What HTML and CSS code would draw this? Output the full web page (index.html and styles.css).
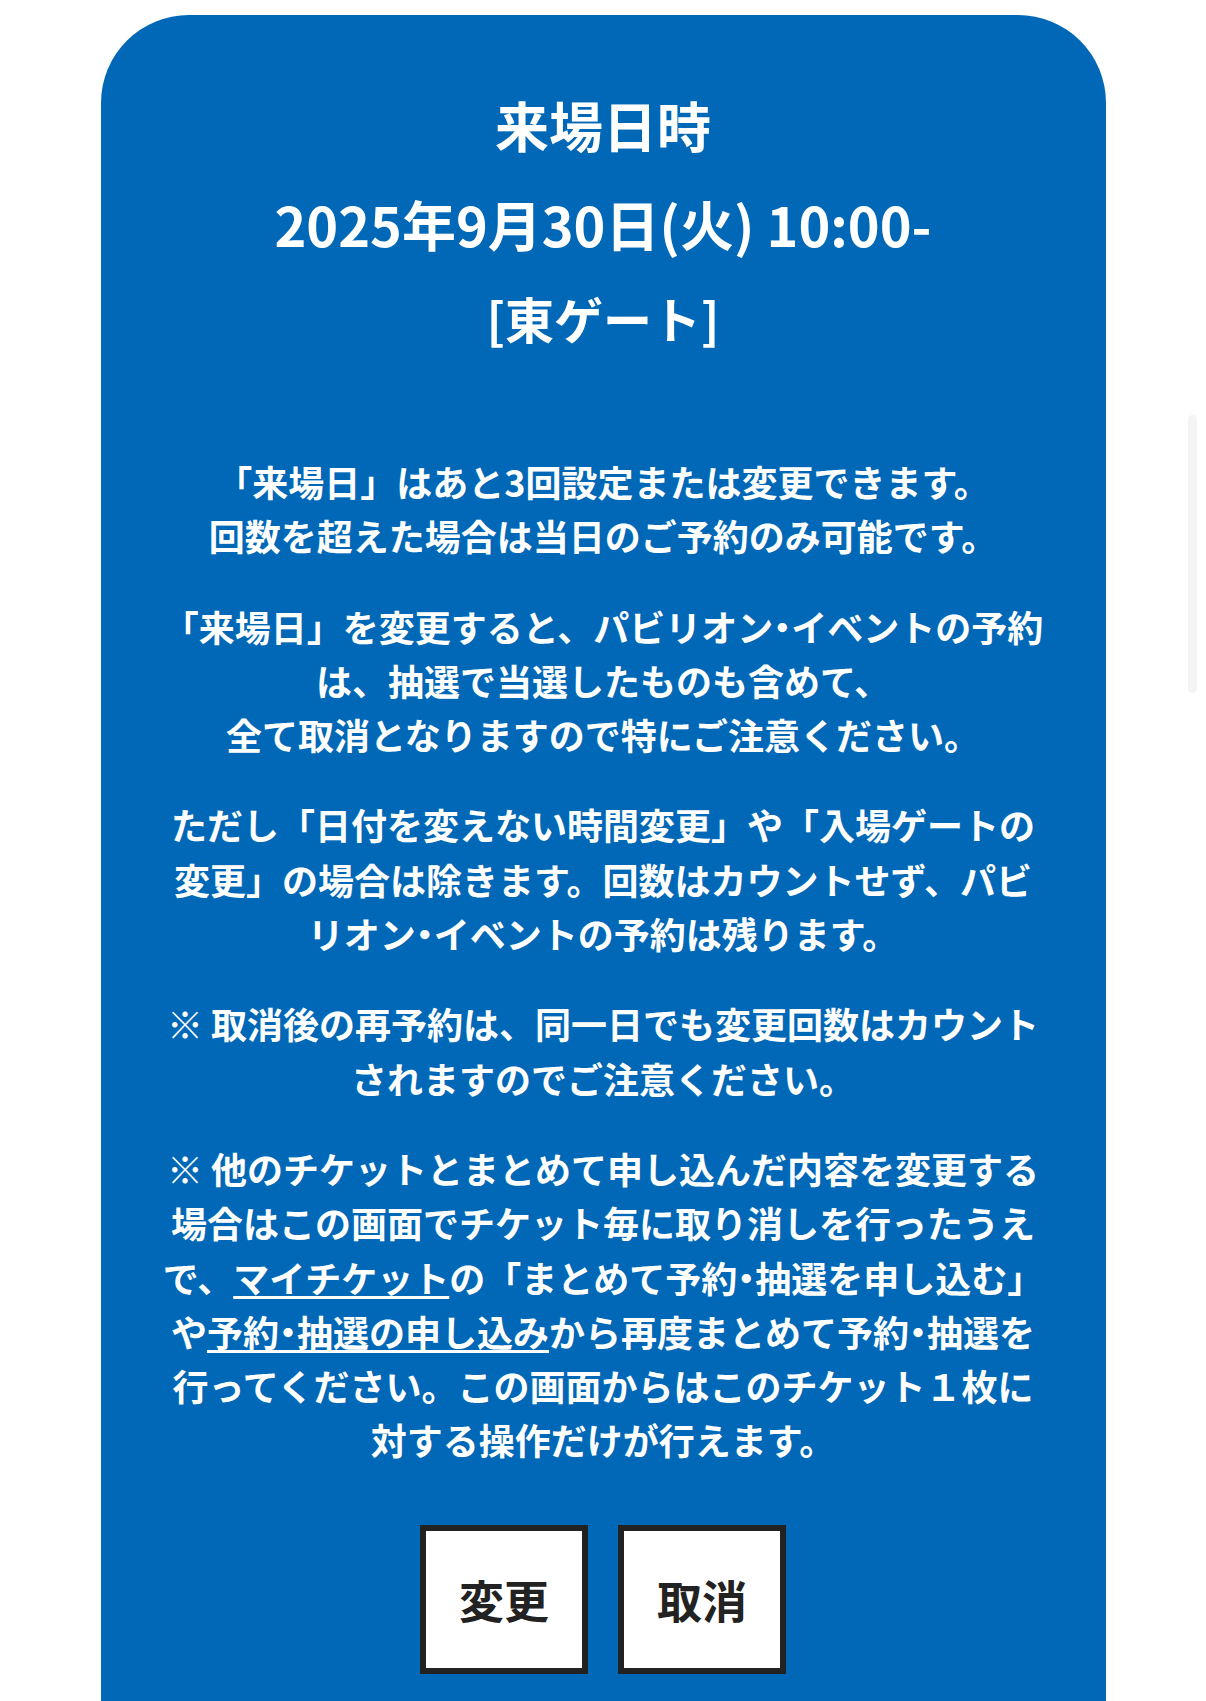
FILE: index.html
```html
<!DOCTYPE html>
<html lang="ja">
<head>
<meta charset="utf-8">
<title>来場日時</title>
<link rel="stylesheet" href="styles.css">
</head>
<body>
<main class="card">
  <div class="visit">
    <h2 class="visit-title">来場日時</h2>
    <p class="visit-date">2025年9月30日(火) 10:00-</p>
    <p class="visit-gate">[東ゲート]</p>
  </div>
  <div class="notes">
    <p>「来場日」はあと3回設定または変更できます。<br>回数を超えた場合は当日のご予約のみ可能です。</p>
    <p>「来場日」を変更すると、パビリオン<span class="dot">・</span>イベントの予約は、抽選で当選したものも含めて、<br>全て取消となりますので特にご注意ください。</p>
    <p>ただし「日付を変えない時間変更」や「入場ゲートの変更」の場合は除きます。回数はカウントせず、パビリオン<span class="dot">・</span>イベントの予約は残ります。</p>
    <p>※ 取消後の再予約は、同一日でも変更回数はカウントされますのでご注意ください。</p>
    <p>※ 他のチケットとまとめて申し込んだ内容を変更する場合はこの画面でチケット毎に取り消しを行ったうえで、<a class="link" href="#">マイチケット</a>の「まとめて予約<span class="dot">・</span>抽選を申し込む」や<a class="link" href="#">予約<span class="dot">・</span>抽選の申し込み</a>から再度まとめて予約<span class="dot">・</span>抽選を行ってください。この画面からはこのチケット１枚に対する操作だけが行えます。</p>
  </div>
  <div class="actions">
    <button class="btn" type="button">変更</button>
    <button class="btn" type="button">取消</button>
  </div>
</main>
<div class="scroll-thumb"></div>
</body>
</html>
```
FILE: styles.css
```css
html, body {
  margin: 0;
  padding: 0;
  background: #ffffff;
}

body {
  font-family: "Noto Sans CJK JP", "Noto Sans", sans-serif;
  font-weight: 700;
  color: #ffffff;
}

.card {
  width: 1005px;
  margin: 15px auto 0;
  box-sizing: border-box;
  background: #0068b7;
  border-radius: 88px 88px 0 0;
  padding: 63px 57px 80px;
  text-align: center;
}

.visit-title,
.visit-date,
.visit-gate {
  margin: 0;
  font-size: 54px;
  line-height: 94px;
  font-weight: 700;
}

.visit-title {
  margin-bottom: 5px;
}

.visit-gate {
  font-size: 49px;
}

.notes {
  margin-top: 89px;
}

.notes p {
  margin: 0 0 36px;
  font-size: 36px;
  line-height: 54.3px;
}

.notes p:last-child {
  margin-bottom: 0;
}

.dot {
  font-feature-settings: "halt";
}

.link {
  color: #ffffff;
  text-decoration: underline;
  text-decoration-thickness: 3px;
  text-underline-offset: 3px;
}

.actions {
  display: flex;
  justify-content: center;
  gap: 30px;
  margin-top: 58px;
}

.btn {
  width: 168px;
  height: 149px;
  box-sizing: border-box;
  border: 6px solid #222222;
  background: #ffffff;
  color: #222222;
  font-family: "Noto Sans CJK JP", sans-serif;
  font-weight: 700;
  font-size: 45px;
  padding: 0;
  display: flex;
  align-items: center;
  justify-content: center;
}

.scroll-thumb {
  position: fixed;
  top: 415px;
  right: 9px;
  width: 9px;
  height: 278px;
  border-radius: 5px;
  background: #f4f4f4;
}
```
